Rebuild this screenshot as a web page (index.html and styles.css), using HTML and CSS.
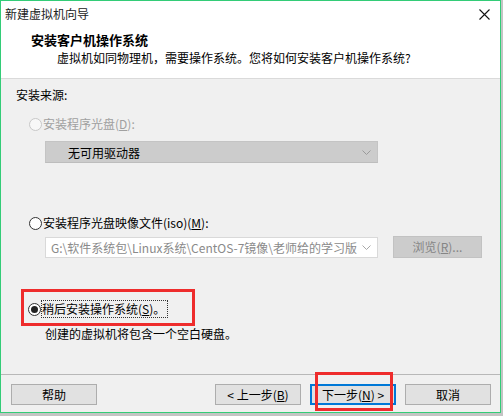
FILE: index.html
```html
<!DOCTYPE html>
<html lang="zh-CN">
<head>
    <meta charset="UTF-8">
    <meta name="viewport" content="width=device-width, initial-scale=1.0">
    <title>新建虚拟机向导</title>
    <link rel="stylesheet" href="styles.css">
</head>
<body>
    <div class="window">
      <div class="titlebar">
        <span class="title">新建虚拟机向导</span>
        <svg class="close" width="11" height="11" viewBox="0 0 11 11">
          <path d="M0.5 0.5 L10.5 10.5 M10.5 0.5 L0.5 10.5" stroke="#111" stroke-width="1.1" fill="none"/>
        </svg>
      </div>
      <div class="header">
        <div class="h_title">安装客户机操作系统</div>
        <div class="h_sub">虚拟机如同物理机，需要操作系统。您将如何安装客户机操作系统?</div>
      </div>
      <div class="content">
        <div class="group_label">安装来源:</div>
        <div class="option option_cd disabled"><span class="radio"></span>安装程序光盘(<u>D</u>):</div>
        <div class="select">
          <span>无可用驱动器</span>
          <svg class="chev" width="9" height="5" viewBox="0 0 9 5"><path d="M0.5 0.5 L4.5 4.5 L8.5 0.5" stroke="#9a9a9a" fill="none"/></svg>
        </div>
        <div class="option option_iso"><span class="radio"></span>安装程序光盘映像文件(iso)(<u>M</u>):</div>
        <div class="iso_row">
          <div class="combo">
            <span class="combo_text">G:\软件系统包\Linux系统\CentOS-7镜像\老师给的学习版</span>
            <svg class="chev" width="9" height="5" viewBox="0 0 9 5"><path d="M0.5 0.5 L4.5 4.5 L8.5 0.5" stroke="#a8a8a8" fill="none"/></svg>
          </div>
          <div class="btn browse">浏览(<u>R</u>)...</div>
        </div>
        <div class="mark_box">
          <div class="option option_later"><span class="radio checked"></span><span class="focus">稍后安装操作系统(<u>S</u>)。</span></div>
        </div>
        <div class="hint">创建的虚拟机将包含一个空白硬盘。</div>
      </div>
      <div class="footer">
        <div class="btn">帮助</div>
        <div class="spacer"></div>
        <div class="btn">&lt; 上一步(<u>B</u>)</div>
        <div class="btn btn_default">下一步(<u>N</u>) &gt;<span class="mark_next"></span></div>
        <div class="btn">取消</div>
      </div>
    </div>
</body>
</html>
```

FILE: styles.css
```css
*{
  box-sizing: border-box;
}
body{
  margin: 0;
  width: 503px;
  height: 416px;
  background-color: #c4c4c4;
  font-family: "Noto Sans CJK SC", "Microsoft YaHei", sans-serif;
  font-size: 12px;
  color: #000;
}
.window{
  width: 501px;
  height: 413px;
  border: 1px solid #33cc77;
  background-color: #f0f0f0;
  display: flex;
  flex-direction: column;
}
.titlebar{
  height: 27px;
  background-color: #fff;
  display: flex;
  align-items: center;
  justify-content: space-between;
  padding: 0 10px 1px 4px;
}
.title{
  color: #222;
  line-height: 16px;
}
.close{
  display: block;
}
.header{
  height: 51px;
  background-color: #fff;
  border-bottom: 1px solid #dadada;
  padding: 3px 0 0 30px;
}
.h_title{
  font-size: 13px;
  font-weight: bold;
  line-height: 17px;
}
.h_sub{
  margin-top: 2px;
  padding-left: 26px;
  line-height: 16px;
}
.content{
  flex: 1;
  padding: 8px 0 0 15px;
  display: flex;
  flex-direction: column;
  align-items: flex-start;
}
.group_label{
  line-height: 16px;
}
.option{
  display: flex;
  align-items: center;
  line-height: 16px;
}
.option u{
  text-decoration: underline;
}
.radio{
  width: 13px;
  height: 13px;
  border: 1px solid #333;
  border-radius: 50%;
  background-color: #fff;
  margin-right: 1px;
  display: flex;
  align-items: center;
  justify-content: center;
}
.radio.checked::after{
  content: "";
  width: 7px;
  height: 7px;
  border-radius: 50%;
  background-color: #222;
}
.option_cd{
  margin: 13px 0 0 13px;
}
.disabled{
  color: #a0a0a0;
}
.disabled .radio{
  border-color: #c8c8c8;
  background-color: #f8f8f8;
}
.select{
  margin: 9px 0 0 29px;
  width: 333px;
  height: 22px;
  background-color: #cccccc;
  border: 1px solid #c4c4c4;
  border-bottom-color: #bdbdbd;
  display: flex;
  align-items: center;
  justify-content: space-between;
  padding: 0 6px 0 22px;
}
.chev{
  display: block;
}
.option_iso{
  margin: 52px 0 0 13px;
}
.iso_row{
  margin: 5px 0 0 29px;
  display: flex;
  align-items: flex-start;
}
.combo{
  margin-top: 1px;
  width: 333px;
  height: 21px;
  background-color: #fff;
  border: 1px solid #d9d9d9;
  display: flex;
  align-items: center;
  justify-content: space-between;
  padding: 0 6px 0 5px;
}
.combo_text{
  white-space: nowrap;
  color: #8a8a8a;
}
.btn{
  position: relative;
  width: 86px;
  height: 21px;
  background-color: #e1e1e1;
  border: 1px solid #adadad;
  display: flex;
  align-items: center;
  justify-content: center;
  line-height: 16px;
}
.btn u{
  text-decoration: underline;
}
.browse{
  margin-left: 15px;
  width: 89px;
  height: 22px;
  background-color: #cccccc;
  border-color: #c2c2c2;
  color: #858585;
}
.mark_box{
  margin: 31px 0 0 5px;
  width: 174px;
  height: 37px;
  border: 3px solid #ee2c2c;
  padding: 9px 0 0 4px;
}
.focus{
  outline: 1px dotted #333;
  outline-offset: 0;
  padding-right: 2px;
}
.hint{
  margin-left: 29px;
  line-height: 16px;
}
.footer{
  height: 38px;
  border-top: 1px solid #b8b8b8;
  padding: 9px 9px 0 10px;
  display: flex;
  align-items: flex-start;
  gap: 9px;
}
.spacer{
  flex: 1;
}
.btn_default{
  border: 2px solid #0078d7;
}
.mark_next{
  position: absolute;
  left: 3px;
  top: -14px;
  width: 78px;
  height: 39px;
  border: 3px solid #ee2c2c;
}
```
